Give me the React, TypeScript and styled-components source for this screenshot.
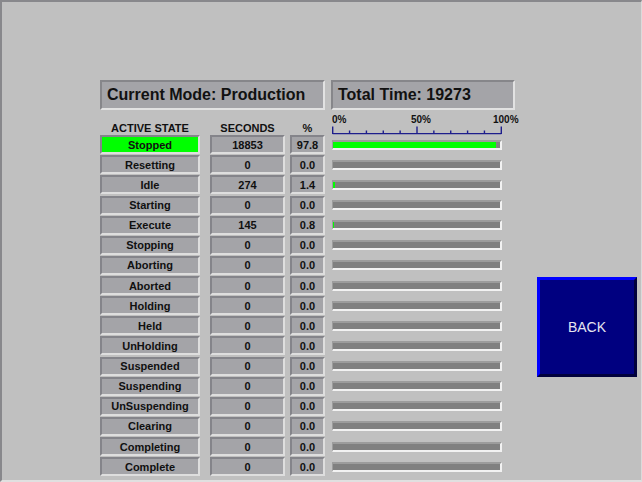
import React from "react";
import styled, { createGlobalStyle } from "styled-components";

const GlobalStyle = createGlobalStyle`
  html, body { margin: 0; padding: 0; background: #c0c0c0; }
  * { box-sizing: border-box; }
`;

const Frame = styled.div`
  width: 642px;
  height: 482px;
  background: #c0c0c0;
  border-top: 2px solid #88888c;
  border-left: 2px solid #88888c;
  border-right: 1px solid #dadada;
  border-bottom: 2px solid #e0e0e0;
  padding: 78px 0 0 98px;
  display: flex;
  align-items: flex-start;
  gap: 22px;
  font-family: "Liberation Sans", Arial, sans-serif;
  color: #141414;
`;

const LeftPane = styled.div`
  display: flex;
  flex-direction: column;
`;

const HeaderRow = styled.div`
  display: flex;
  gap: 6px;
`;

const HeaderBox = styled.div<{ $w: number }>`
  width: ${(p) => p.$w}px;
  height: 30px;
  background: #a4a4a8;
  border-top: 2px solid #86868a;
  border-left: 2px solid #86868a;
  border-bottom: 2px solid #e2e2e2;
  border-right: 2px solid #e2e2e2;
  display: flex;
  align-items: center;
  padding-left: 5px;
  font-size: 16px;
  font-weight: bold;
  color: #111;
`;

const Table = styled.div`
  display: grid;
  grid-template-columns: 100px 10px 75px 5px 35px 7px 170px;
  grid-template-rows: 24px repeat(17, 19px);
  row-gap: 1.125px;
`;

const ColHeading = styled.div<{ $col: number }>`
  grid-column: ${(p) => p.$col};
  align-self: end;
  text-align: center;
  font-size: 11px;
  line-height: 12px;
  font-weight: bold;
  color: #111;
  white-space: nowrap;
`;

const ScaleCell = styled.div`
  grid-column: 7;
  position: relative;
  overflow: visible;
`;

const Cell = styled.div<{ $col: number; $active?: boolean }>`
  grid-column: ${(p) => p.$col};
  height: 19px;
  background: ${(p) => (p.$active ? "#00ff00" : "#a4a4a8")};
  border-top: 2px solid #84848a;
  border-left: 2px solid #84848a;
  border-bottom: 2px solid #dedede;
  border-right: 2px solid #dedede;
  display: flex;
  align-items: center;
  justify-content: center;
  font-size: 11px;
  font-weight: bold;
  color: #101010;
  white-space: nowrap;
`;

const BarCell = styled.div`
  grid-column: 7;
  display: flex;
  align-items: center;
`;

const Track = styled.div`
  width: 170px;
  height: 10px;
  background: #808080;
  border-top: 2px solid #9c9c9c;
  border-left: 1px solid #9c9c9c;
  border-bottom: 2px solid #f2f2f2;
  border-right: 2px solid #f2f2f2;
  display: flex;
`;

const Fill = styled.div`
  height: 100%;
  background: #00ff00;
`;

const BackButton = styled.button`
  margin-top: 197px;
  width: 100px;
  height: 100px;
  background: #000080;
  border-top: 3px solid #0000ff;
  border-left: 3px solid #0000ff;
  border-bottom: 3px solid #00003c;
  border-right: 3px solid #00003c;
  color: #e6e6f0;
  font-family: "Liberation Sans", Arial, sans-serif;
  font-size: 14px;
  padding: 0;
  cursor: pointer;
`;

type Row = { name: string; sec: number; pct: string };

const rows: Row[] = [
  { name: "Stopped", sec: 18853, pct: "97.8" },
  { name: "Resetting", sec: 0, pct: "0.0" },
  { name: "Idle", sec: 274, pct: "1.4" },
  { name: "Starting", sec: 0, pct: "0.0" },
  { name: "Execute", sec: 145, pct: "0.8" },
  { name: "Stopping", sec: 0, pct: "0.0" },
  { name: "Aborting", sec: 0, pct: "0.0" },
  { name: "Aborted", sec: 0, pct: "0.0" },
  { name: "Holding", sec: 0, pct: "0.0" },
  { name: "Held", sec: 0, pct: "0.0" },
  { name: "UnHolding", sec: 0, pct: "0.0" },
  { name: "Suspended", sec: 0, pct: "0.0" },
  { name: "Suspending", sec: 0, pct: "0.0" },
  { name: "UnSuspending", sec: 0, pct: "0.0" },
  { name: "Clearing", sec: 0, pct: "0.0" },
  { name: "Completing", sec: 0, pct: "0.0" },
  { name: "Complete", sec: 0, pct: "0.0" },
];

const Scale = () => {
  const w = 169;
  const ticks = Array.from({ length: 11 }, (_, i) => i);
  return (
    <svg width={200} height={26} style={{ overflow: "visible", display: "block" }}>
      <g fill="#111" fontFamily='"Liberation Sans", Arial, sans-serif' fontSize="10" fontWeight="bold">
        <text x={0} y={13.3}>0%</text>
        <text x={79} y={13.3}>50%</text>
        <text x={161} y={13.3}>100%</text>
      </g>
      <g stroke="#1e1e8c" strokeWidth={1.4} fill="none">
        <line x1={0.7} y1={23.6} x2={w + 0.3} y2={23.6} />
        {ticks.map((i) => {
          const x = 0.7 + (i * (w - 0.4)) / 10;
          const major = i === 0 || i === 5 || i === 10;
          return <line key={i} x1={x} y1={major ? 16.5 : 20.5} x2={x} y2={24} />;
        })}
      </g>
    </svg>
  );
};

export default function App() {
  return (
    <>
      <GlobalStyle />
      <Frame>
        <LeftPane>
          <HeaderRow>
            <HeaderBox $w={225}>Current Mode: Production</HeaderBox>
            <HeaderBox $w={184}>Total Time: 19273</HeaderBox>
          </HeaderRow>
          <Table>
            <ColHeading $col={1}>ACTIVE STATE</ColHeading>
            <ColHeading $col={3}>SECONDS</ColHeading>
            <ColHeading $col={5}>%</ColHeading>
            <ScaleCell>
              <Scale />
            </ScaleCell>
            {rows.map((r, i) => (
              <React.Fragment key={r.name}>
                <Cell $col={1} $active={i === 0}>{r.name}</Cell>
                <Cell $col={3}>{r.sec}</Cell>
                <Cell $col={5}>{r.pct}</Cell>
                <BarCell>
                  <Track>
                    <Fill style={{ width: `${parseFloat(r.pct)}%` }} />
                  </Track>
                </BarCell>
              </React.Fragment>
            ))}
          </Table>
        </LeftPane>
        <BackButton>BACK</BackButton>
      </Frame>
    </>
  );
}
